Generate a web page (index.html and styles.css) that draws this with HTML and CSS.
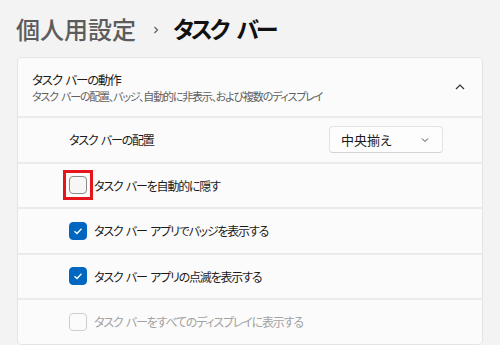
FILE: index.html
```html
<!DOCTYPE html>
<html lang="ja">
<head>
<meta charset="utf-8">
<link rel="stylesheet" href="styles.css">
</head>
<body>
<div class="page">
  <h1 class="crumbs">
    <span class="crumb-parent">個人用設定</span>
    <svg class="crumb-sep" width="10" height="10" viewBox="0 0 10 10"><path d="M3.5 2 L6.5 5 L3.5 8" fill="none" stroke="#5f5f5f" stroke-width="1.2"/></svg>
    <span class="crumb-current">タスク バー</span>
  </h1>
  <div class="expander">
    <div class="exp-header">
      <div class="exp-text">
        <div class="exp-title">タスク バーの動作</div>
        <div class="exp-sub">タスク バーの配置、バッジ、自動的に非表示、および複数のディスプレイ</div>
      </div>
      <svg class="exp-chev" width="12" height="12" viewBox="0 0 12 12"><path d="M2 8 L6 4 L10 8" fill="none" stroke="#333" stroke-width="1.2"/></svg>
    </div>
    <div class="row">
      <span class="row-label indent">タスク バーの配置</span>
      <div class="combo">
        <span>中央揃え</span>
        <svg width="10" height="10" viewBox="0 0 10 10"><path d="M2 3.5 L5 6.5 L8 3.5" fill="none" stroke="#444" stroke-width="1"/></svg>
      </div>
    </div>
    <div class="row">
      <span class="hl"><span class="cb"></span></span>
      <span class="row-label tight">タスク バーを自動的に隠す</span>
    </div>
    <div class="row">
      <span class="cb-wrap"><span class="cb checked"><svg width="12" height="12" viewBox="0 0 12 12"><path d="M2.5 6.2 L5 8.5 L9.5 3.8" fill="none" stroke="#fff" stroke-width="1.3"/></svg></span></span>
      <span class="row-label">タスク バー アプリでバッジを表示する</span>
    </div>
    <div class="row">
      <span class="cb-wrap"><span class="cb checked"><svg width="12" height="12" viewBox="0 0 12 12"><path d="M2.5 6.2 L5 8.5 L9.5 3.8" fill="none" stroke="#fff" stroke-width="1.3"/></svg></span></span>
      <span class="row-label">タスク バー アプリの点滅を表示する</span>
    </div>
    <div class="row">
      <span class="cb-wrap"><span class="cb disabled"></span></span>
      <span class="row-label muted">タスク バーをすべてのディスプレイに表示する</span>
    </div>
  </div>
</div>
</body>
</html>
```

FILE: styles.css
```css
* { box-sizing: border-box; }
html, body {
  margin: 0;
  padding: 0;
  background: #f3f3f3;
  width: 500px;
  height: 345px;
  overflow: hidden;
  font-family: "Noto Sans CJK JP", "Noto Sans", sans-serif;
  font-feature-settings: "palt";
  color: #1b1b1b;
}
.page {
  padding: 12px 17px 0 17px;
}
.crumbs {
  margin: 0;
  height: 33px;
  display: flex;
  align-items: center;
  font-size: 24px;
  font-weight: 500;
  line-height: 33px;
  margin-left: -1px;
}
.crumb-parent { color: #5c5c5c; font-weight: 500; }
.crumb-sep { margin: 2px 12px 0 15px; }
.crumb-current { color: #111; font-weight: 700; font-size: 23px; letter-spacing: -3px; word-spacing: 7px; }
.expander {
  margin-top: 12px;
  display: flex;
  flex-direction: column;
  gap: 2px;
  background: #ebebeb;
  border: 1px solid #e4e4e4;
  border-radius: 5px;
  overflow: hidden;
}
.exp-header {
  height: 58px;
  background: #fbfbfb;
  display: flex;
  align-items: center;
  justify-content: space-between;
  padding: 0 16px 0 14px;
}
.exp-text { display: flex; flex-direction: column; }
.exp-title { font-size: 12.5px; line-height: 18px; color: #1b1b1b; letter-spacing: -1.2px; word-spacing: 2px; }
.exp-sub { font-size: 11px; line-height: 15px; color: #5f5f5f; letter-spacing: -1.2px; word-spacing: 2px; }
.row {
  height: 43.5px;
  background: #fbfbfb;
  display: flex;
  align-items: center;
  padding-left: 50px;
  padding-right: 39px;
}
.row-label { font-size: 12px; color: #1b1b1b; letter-spacing: -1.2px; word-spacing: 2px; }
.row-label.indent { flex: 1; margin-left: 1px; }
.row-label.muted { color: #a2a2a2; }
.combo {
  width: 114px;
  height: 27px;
  background: #fdfdfd;
  border: 1px solid #e3e3e3;
  border-bottom-color: #d4d4d4;
  border-radius: 4px;
  display: flex;
  align-items: center;
  justify-content: space-between;
  padding: 0 12px 0 11px;
  font-size: 13px;
  color: #1b1b1b;
}
.hl {
  width: 30px;
  height: 30px;
  margin-left: -5px;
  border: 3px solid #e8141c;
  display: flex;
  align-items: center;
  justify-content: center;
  margin-right: 1px;
}
.cb-wrap {
  width: 24px;
  display: flex;
  align-items: center;
  justify-content: flex-start;
  margin-left: 1px;
  margin-right: 1px;
}
.cb {
  width: 18px;
  height: 18px;
  border-radius: 4px;
  border: 1px solid #8a8a8a;
  background: #f6f6f6;
  display: flex;
  align-items: center;
  justify-content: center;
}
.cb.checked { background: #0067c0; border-color: #0067c0; }
.cb.disabled { border-color: #cfcfcf; background: #fbfbfb; }
```
